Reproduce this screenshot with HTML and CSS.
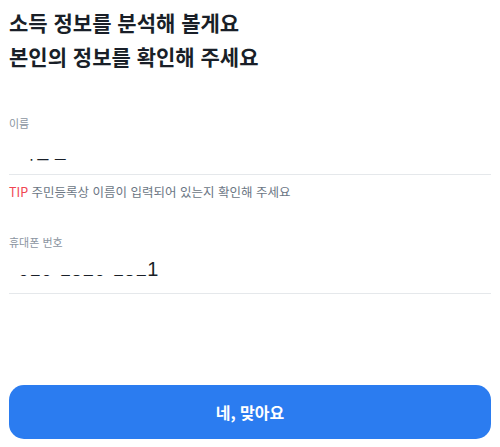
FILE: index.html
```html
<!DOCTYPE html>
<html lang="ko">
<head>
<meta charset="utf-8">
<title>소득 정보</title>
<link rel="stylesheet" href="styles.css">
</head>
<body>
<main class="page">
  <h1 class="title">소득 정보를 분석해 볼게요<br>본인의 정보를 확인해 주세요</h1>

  <section class="field field-name">
    <div class="label">이름</div>
    <div class="value"><span class="masked masked-name">이순민</span></div>
  </section>
  <p class="tip"><span class="tip-mark">TIP</span> 주민등록상 이름이 입력되어 있는지 확인해 주세요</p>

  <section class="field field-phone">
    <div class="label">휴대폰 번호</div>
    <div class="value"><span class="masked masked-phone">010-1520-152</span><span class="digit">1</span></div>
  </section>

  <button class="confirm" type="button">네, 맞아요</button>
</main>
</body>
</html>
```

FILE: styles.css
```css
* { box-sizing: border-box; }
html, body { margin: 0; padding: 0; background: #ffffff; }
body {
  font-family: "Noto Sans CJK KR", "Noto Sans", sans-serif;
  color: #191f28;
}
.page {
  min-height: 100vh;
  display: flex;
  flex-direction: column;
  padding: 5px 9px 8px;
}
.title {
  margin: 0;
  font-size: 21px;
  line-height: 34px;
  font-weight: 700;
  color: #191f28;
}
.field {
  display: flex;
  flex-direction: column;
}
.field-name { margin-top: 42px; }
.field-phone { margin-top: 33px; }
.label {
  font-size: 11px;
  line-height: 16px;
  color: #8b95a1;
}
.value {
  margin-top: 5px;
  height: 39px;
  padding: 0 9px 10px;
  border-bottom: 1px solid #e5e8eb;
  font-family: "Liberation Sans", "Noto Sans CJK KR", sans-serif;
  font-size: 20px;
  line-height: 28px;
  color: #191f28;
  display: flex;
  align-items: flex-start;
  white-space: pre;
}
.masked {
  display: inline-block;
  height: 28px;
}
.masked-name {
  font-size: 18px;
  clip-path: inset(20px 0 4px 0);
  transform: translateY(3px);
}
.masked-phone {
  letter-spacing: 0.4px;
  clip-path: inset(20px 0 5px 0);
}
.tip {
  margin: 8px 0 0;
  font-size: 12.5px;
  line-height: 18px;
  color: #6b7684;
}
.tip-mark { color: #f04452; }
.confirm {
  margin-top: auto;
  height: 54px;
  width: 100%;
  border: 0;
  border-radius: 15px;
  background: #2b7cf0;
  color: #ffffff;
  font-family: "Noto Sans CJK KR", sans-serif;
  font-size: 16px;
  font-weight: 700;
}
```
